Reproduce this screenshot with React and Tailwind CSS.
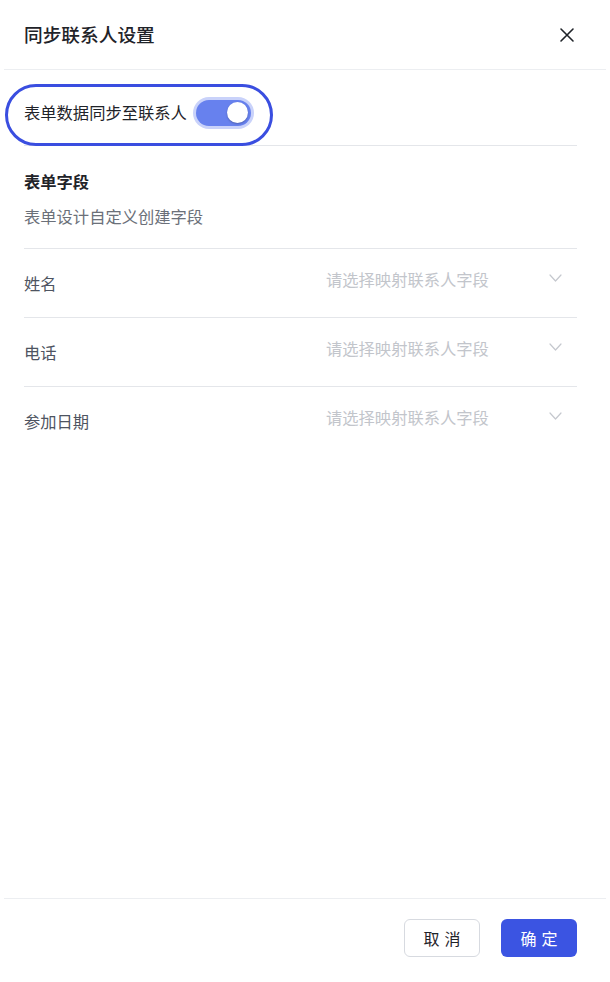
import React, { useState } from 'react';

const fields = ['姓名', '电话', '参加日期'];

const CloseIcon = () => (
  <svg width="16" height="16" viewBox="0 0 16 16" fill="none" stroke="#1f2329" strokeWidth="1.6" strokeLinecap="round">
    <path d="M2 2l12 12M14 2L2 14" />
  </svg>
);

const Chevron = () => (
  <svg width="13" height="8" viewBox="0 0 13 8" fill="none" stroke="#c5c8ce" strokeWidth="1.2" strokeLinecap="round" strokeLinejoin="round">
    <path d="M1 1l5.5 6L12 1" />
  </svg>
);

const App = () => {
  const [sync, setSync] = useState(true);

  return (
    <div className="w-[610px] h-[982px] bg-white flex flex-col font-['Noto_Sans_CJK_SC','Noto_Sans',sans-serif] text-[#1f2329]">
      {/* header */}
      <div className="h-[69px] flex items-center justify-between pl-6 pr-[35px]">
        <h1 className="text-[18.7px] font-medium">同步联系人设置</h1>
        <button className="p-0">
          <CloseIcon />
        </button>
      </div>
      <div className="mx-1 h-px bg-[#eceef1]" />

      <div className="flex-1 pl-6 pr-[33px]">
        {/* sync toggle */}
        <div className="relative h-[76px] flex items-center gap-1.5 border-b border-[#e4e6ea] pt-[10px]">
          <span className="text-[16.3px]">表单数据同步至联系人</span>
          <button
            onClick={() => setSync(!sync)}
            className="w-[61px] h-[32px] rounded-full bg-[#c9d2fa] p-[3px] flex"
          >
            <span className={`w-full h-full rounded-full flex items-center px-[2.5px] ${sync ? 'bg-[#6781ee] justify-end' : 'bg-[#c9cdd4] justify-start'}`}>
              <span className="w-[21px] h-[21px] rounded-full bg-white shadow-[0_1px_2px_rgba(0,0,0,0.25)]" />
            </span>
          </button>
          <div className="absolute left-[-19px] top-[14px] w-[268px] h-[62px] rounded-full border-[3px] border-[#3a4ee0] pointer-events-none" />
        </div>

        {/* form fields */}
        <div className="pt-[23px] pb-5 border-b border-[#e4e6ea]">
          <div className="text-[16.3px] font-semibold leading-6">表单字段</div>
          <div className="mt-[11px] text-[16.3px] leading-6 text-[#6b7079]">表单设计自定义创建字段</div>
        </div>

        {fields.map((f, i) => (
          <div
            key={f}
            className={`h-[68px] flex items-center ${i < fields.length - 1 ? 'border-b border-[#e4e6ea] box-content' : ''}`}
          >
            <span className="flex-1 text-[16.3px] text-[#4e5461]">{f}</span>
            <div className="flex items-center -mt-2 w-[251px]">
              <span className="flex-1 text-[16.3px] text-[#c2c5cb]">请选择映射联系人字段</span>
              <span className="mr-[15px] -mt-[2px]">
                <Chevron />
              </span>
            </div>
          </div>
        ))}
      </div>

      {/* footer */}
      <div className="mx-1 h-px bg-[#eceef1]" />
      <div className="h-[83px] flex items-start justify-end gap-[21px] pt-[20px] pr-[33px]">
        <button className="w-[76px] h-[38px] rounded-md border border-[#d7dae0] bg-white text-[16px] tracking-[5px] pl-[5px] text-[#1f2329]">
          取消
        </button>
        <button className="w-[76px] h-[38px] rounded-md bg-[#3b54e2] text-[16px] tracking-[5px] pl-[5px] text-white">
          确定
        </button>
      </div>
    </div>
  );
};

export default App;
